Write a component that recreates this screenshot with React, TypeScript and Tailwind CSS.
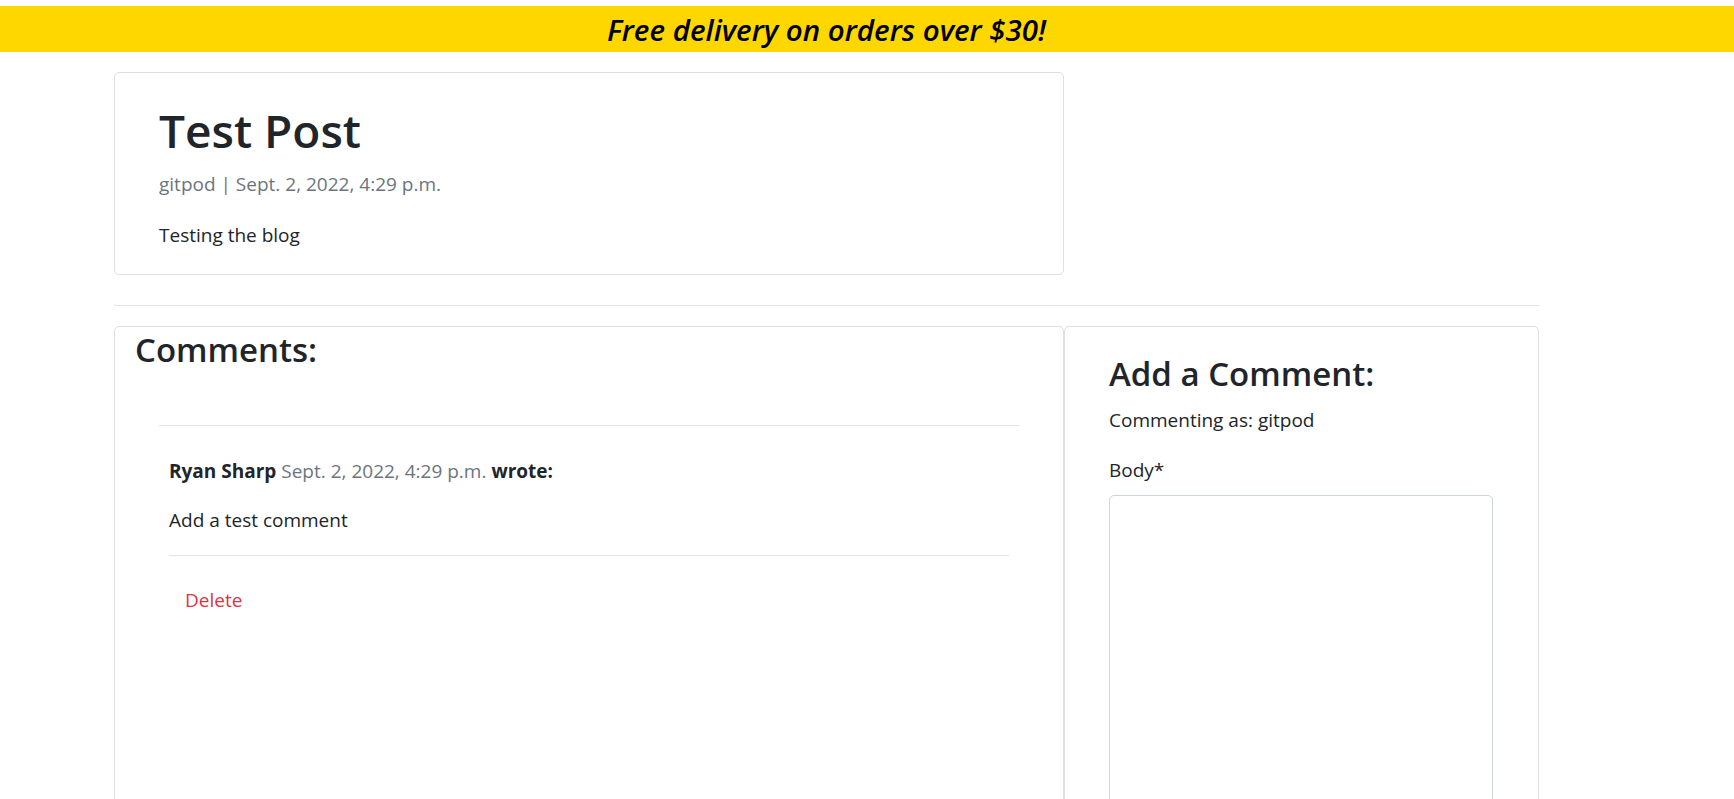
export default function App() {
  return (
    <div className="min-h-screen bg-white text-[#212529] font-['Open_Sans',sans-serif] overflow-hidden">
      <div className="h-[6px]" />
      {/* promo banner */}
      <div className="h-[46px] bg-[#ffd700] flex items-center pt-[2px]">
        <p className="w-[1653px] text-center italic font-semibold text-[29.5px] leading-[46px] text-black">
          Free delivery on orders over $30!
        </p>
      </div>

      <div className="ml-[114px] w-[1425px]">
        {/* post */}
        <div className="mt-[20px] w-[950px] border border-[#dfdfdf] rounded-[5px] pt-[30px] pb-[25px] pl-[44px]">
          <h1 className="text-[46px] leading-[1.2] font-semibold">Test Post</h1>
          <p className="mt-[12px] text-[19px] leading-[1.5] text-[#6c757d]">gitpod | Sept. 2, 2022, 4:29 p.m.</p>
          <p className="mt-[22px] text-[19px] leading-[1.5]">Testing the blog</p>
        </div>

        <hr className="mt-[30px] border-t border-[#e2e2e2]" />

        <div className="mt-[20px] flex">
          {/* comments list */}
          <div className="w-[950px] h-[520px] border border-[#dfdfdf] rounded-[5px] pt-[3px]">
            <h3 className="pl-[20px] text-[33px] leading-[1.2] font-semibold">Comments:</h3>
            <div className="px-[44px] mt-[55px]">
              <hr className="border-t border-[#e2e2e2]" />
              <div className="pl-[10px] pr-[10px]">
                <p className="mt-[31px] text-[19px] leading-[1.5]">
                  <span className="font-bold">Ryan Sharp</span>{" "}
                  <span className="text-[#6c757d]">Sept. 2, 2022, 4:29 p.m.</span>{" "}
                  <span className="font-bold">wrote:</span>
                </p>
                <p className="mt-[21px] text-[19px] leading-[1.5]">Add a test comment</p>
                <hr className="mt-[20px] border-t border-[#e2e2e2]" />
                <button className="mt-[30px] ml-[16px] text-[19px] leading-[1.5] text-[#dc3545]">Delete</button>
              </div>
            </div>
          </div>

          {/* comment form */}
          <div className="flex-1 h-[520px] border border-[#dfdfdf] rounded-[5px] pt-[27px] pl-[44px]">
            <h3 className="text-[33px] leading-[1.2] font-semibold">Add a Comment:</h3>
            <p className="mt-[12px] text-[19px] leading-[1.5]">Commenting as: gitpod</p>
            <label className="block mt-[22px] text-[19px] leading-[1.5]">Body*</label>
            <textarea className="block mt-[10px] w-[384px] h-[340px] border border-[#ced4da] rounded-[5px] resize-y" />
          </div>
        </div>
      </div>
    </div>
  );
}
